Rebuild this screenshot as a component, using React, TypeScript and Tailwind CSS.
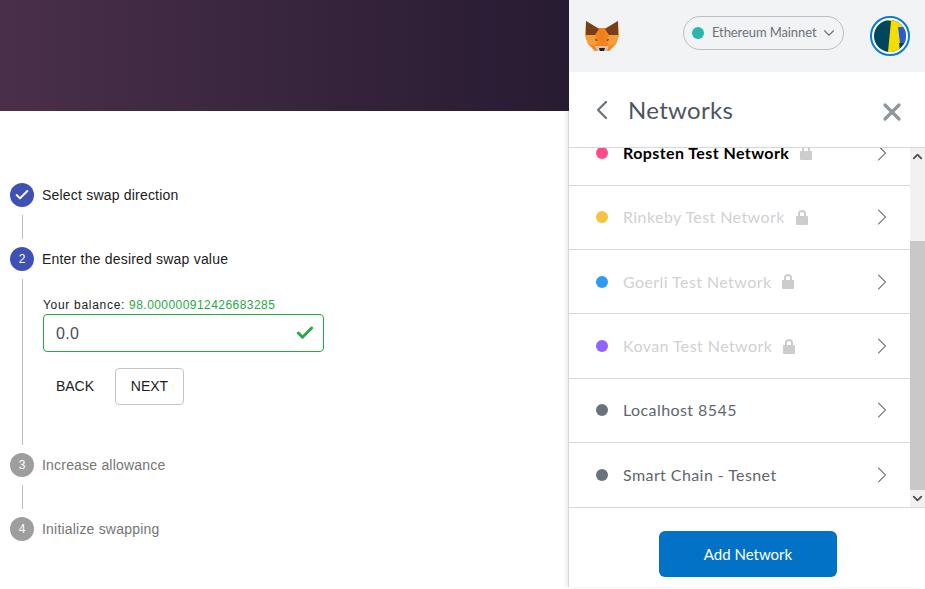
import { Check, ChevronDown, ChevronLeft, ChevronRight, ChevronUp, X } from "lucide-react";

const networks = [
  { name: "Ropsten Test Network", dot: "bg-[#ff4a8d]", text: "font-bold text-black", locked: true },
  { name: "Rinkeby Test Network", dot: "bg-[#f6c343]", text: "text-[#cfd1d3]", locked: true },
  { name: "Goerli Test Network", dot: "bg-[#3099f2]", text: "text-[#cfd1d3]", locked: true },
  { name: "Kovan Test Network", dot: "bg-[#9064ff]", text: "text-[#cfd1d3]", locked: true },
  { name: "Localhost 8545", dot: "bg-[#6a737d]", text: "text-[#5f666e]", locked: false },
  { name: "Smart Chain - Tesnet", dot: "bg-[#6a737d]", text: "text-[#5f666e]", locked: false },
];

function Fox() {
  return (
    <svg viewBox="0 0 34 32" className="h-8 w-[34px]">
      <path d="M1 1 L13 8 L21 8 L33 1 L34 15 L31 24 L24 31 L10 31 L3 24 L0 15 Z" fill="#f5841f" />
      <path d="M1 1 L14 9 L10 15 L1 16 Z" fill="#763e1a" />
      <path d="M33 1 L20 9 L24 15 L33 16 Z" fill="#763e1a" />
      <path d="M14 9 L20 9 L19 21 L15 21 Z" fill="#ec7f1e" />
      <path d="M0 15 L10 15 L13 22 L9 26 L3 24 Z" fill="#f89c35" />
      <path d="M34 15 L24 15 L21 22 L25 26 L31 24 Z" fill="#f89c35" />
      <path d="M10 19 L13 20 L11 21 Z" fill="#233447" />
      <path d="M24 19 L21 20 L23 21 Z" fill="#233447" />
      <path d="M10 26 L24 26 L22 31 L12 31 Z" fill="#d7c1b3" />
      <path d="M14 28 L20 28 L19 31 L15 31 Z" fill="#222222" />
    </svg>
  );
}

function Avatar() {
  return (
    <div className="flex h-10 w-10 items-center justify-center rounded-full border-2 border-[#037dd6] bg-white">
      <svg viewBox="0 0 32 32" className="h-8 w-8 rounded-full">
        <rect width="32" height="32" fill="#01465c" />
        <path d="M9 0 H24 L32 7 V23 H25 L26 32 H14 L17 1 Z" fill="#f5dd00" />
        <path d="M24 7 H32 V23 H26 Z" fill="#2a5bd7" />
      </svg>
    </div>
  );
}

function LockIcon() {
  return (
    <svg viewBox="0 0 12 15" className="ml-[11px] h-[15px] w-3 shrink-0">
      <path d="M3 7 V4 a3 3 0 0 1 6 0 V7" fill="none" stroke="#cccccc" strokeWidth="2" />
      <rect y="6" width="12" height="9" rx="1" fill="#cccccc" />
    </svg>
  );
}

function StepBadge({ label, active }: { label: string; active: boolean }) {
  return (
    <div
      className={`flex h-6 w-6 shrink-0 items-center justify-center rounded-full text-xs text-white ${active ? "bg-[#3f51b5]" : "bg-[#9e9e9e]"}`}
    >
      {label === "done" ? <Check className="h-4 w-4" strokeWidth={3} /> : label}
    </div>
  );
}

function Step({ label, title, active }: { label: string; title: string; active: boolean }) {
  return (
    <div className="flex h-6 items-center gap-2">
      <StepBadge label={label} active={active} />
      <span className={`text-sm tracking-[0.2px] ${active ? "text-[#212121]" : "text-[#757575]"}`}>{title}</span>
    </div>
  );
}

function Connector() {
  return <div className="my-2 ml-3 h-6 w-px bg-[#bdbdbd]" />;
}

function Row({ name, dot, text, locked }: { name: string; dot: string; text: string; locked: boolean }) {
  return (
    <div className="flex h-[64.4px] shrink-0 items-center border-b border-[#d6d9dc] pr-[14px] pl-[27px]">
      <span className={`h-3 w-3 shrink-0 rounded-full ${dot}`} />
      <span className={`ml-[15px] font-[Lato,sans-serif] text-base tracking-[0.42px] ${text}`}>{name}</span>
      {locked && <LockIcon />}
      <ChevronRight className="ml-auto h-7 w-7 text-[#4d5560]" strokeWidth={0.9} />
    </div>
  );
}

export default function App() {
  return (
    <div className="flex h-[589px] w-[925px] overflow-hidden bg-white font-['Liberation_Sans',sans-serif]">
      <main className="flex w-[569px] shrink-0 flex-col">
        <div className="relative z-10 h-[111px] bg-gradient-to-r from-[#4a2f4a] to-[#271b32]" />
        <section className="pt-[72px] pl-[10px]">
          <Step label="done" title="Select swap direction" active />
          <Connector />
          <Step label="2" title="Enter the desired swap value" active />
          <div className="mt-2 ml-3 flex h-[166px] border-l border-[#bdbdbd] pl-5">
            <div className="flex flex-col pt-[19px]">
              <p className="text-xs leading-[14px] tracking-[0.7px] text-[#212121]">
                Your balance: <span className="tracking-[0.45px] text-[#28a745]">98.000000912426683285</span>
              </p>
              <div className="mt-[2px] flex h-[38px] w-[281px] items-center justify-between rounded border border-[#28a745] pr-[8px] pl-3">
                <span className="pt-px text-base tracking-[0.3px] text-[#495057]">0.0</span>
                <Check className="h-[20px] w-[20px] text-[#28a745]" strokeWidth={3.5} />
              </div>
              <div className="mt-4 flex items-center">
                <button type="button" className="mr-2 h-9 w-16 pb-[2px] text-sm text-[#212121]">BACK</button>
                <button type="button" className="h-[37px] w-[69px] rounded border border-[#c4c4c4] pb-[2px] text-sm text-[#212121]">NEXT</button>
              </div>
            </div>
          </div>
          <div className="h-2" />
          <Step label="3" title="Increase allowance" active={false} />
          <Connector />
          <Step label="4" title="Initialize swapping" active={false} />
        </section>
      </main>

      <aside className="flex h-[587px] w-[356px] shrink-0 flex-col font-[Lato,sans-serif] shadow-[-1px_0_0_#d6d9dc,-3px_0_4px_rgba(0,0,0,0.08)]">
        <header className="flex h-[72px] shrink-0 items-center bg-[#f2f3f4] pr-[15px] pl-[16px]">
          <Fox />
          <div className="mb-[6px] ml-[64px] flex h-[34px] w-[161px] items-center rounded-full border border-[#bbc0c5] pl-2">
            <span className="h-3 w-3 shrink-0 rounded-full bg-[#29b6af]" />
            <span className="ml-2 text-[13px] tracking-[-0.1px] whitespace-nowrap text-[#6a737d]">Ethereum Mainnet</span>
            <ChevronDown className="ml-[4px] h-[18px] w-[18px] shrink-0 text-[#6a737d]" strokeWidth={1.5} />
          </div>
          <div className="ml-auto">
            <Avatar />
          </div>
        </header>

        <div className="flex h-[76px] shrink-0 items-center border-b border-[#d6d9dc] pr-[19px] pl-[17px]">
          <ChevronLeft className="h-8 w-8 text-[#6a737d]" strokeWidth={1.7} />
          <h1 className="ml-[10px] text-2xl tracking-[0.3px] text-[#4d5560]">Networks</h1>
          <X className="mt-1 ml-auto h-7 w-7 text-[#8f969c]" strokeWidth={2.8} />
        </div>

        <div className="flex min-h-0 flex-1 border-b border-[#d6d9dc]">
          <div className="min-w-0 flex-1 overflow-hidden">
            <div className="-mt-[26.8px] flex flex-col">
              {networks.map((network) => (
                <Row key={network.name} {...network} />
              ))}
            </div>
          </div>
          <div className="flex w-[15px] shrink-0 flex-col bg-[#f1f1f1] text-[#505050]">
            <ChevronUp className="h-[17px] w-[15px]" strokeWidth={3} />
            <div className="mt-[76px] h-[249px] bg-[#c8c8c8]" />
            <div className="flex-1" />
            <ChevronDown className="h-[17px] w-[15px]" strokeWidth={3} />
          </div>
        </div>

        <footer className="flex h-[79px] shrink-0 items-start justify-center pt-[23px] pl-[2px]">
          <button type="button" className="h-[46px] w-[178px] rounded-md bg-[#0172c6] text-[15px] text-white">
            Add Network
          </button>
        </footer>
      </aside>
    </div>
  );
}
